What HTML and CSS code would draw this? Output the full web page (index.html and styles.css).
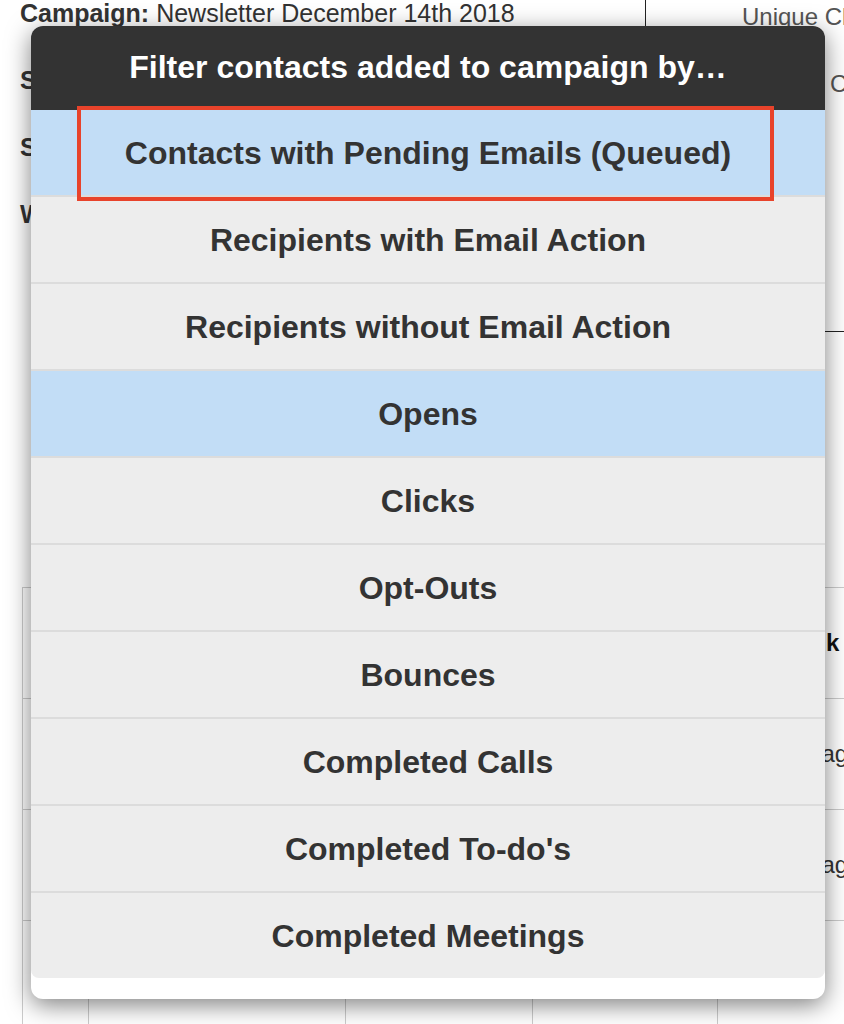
FILE: index.html
```html
<!DOCTYPE html>
<html lang="en">
<head>
  <meta charset="UTF-8">
  <meta name="viewport" content="width=device-width, initial-scale=1.0">
  <title>Campaign Report</title>
  <link rel="stylesheet" href="styles.css">
</head>
<body>

  <!-- campaign summary behind the dialog -->
  <div class="summary">
    <div class="summary-info">
      <p class="info-row"><b>Campaign:</b> Newsletter December 14th 2018</p>
      <p class="info-row"><b>Sent:</b> 12/14/2018 9:00 AM</p>
      <p class="info-row"><b>Subject:</b> Holiday hours and updates</p>
      <p class="info-row"><b>Workflow:</b> Monthly Newsletter</p>
    </div>
    <div class="summary-stats">
      <p class="stat-row">Unique Clicks</p>
      <p class="stat-row stat-row-far">Clicks</p>
    </div>
  </div>

  <table class="recipients">
    <colgroup>
      <col class="col-check">
      <col class="col-name">
      <col class="col-email">
      <col class="col-status">
      <col class="col-last">
    </colgroup>
    <tr class="recipients-head">
      <th></th>
      <th>Name</th>
      <th>Email</th>
      <th>Status</th>
      <th>Link</th>
    </tr>
    <tr>
      <td></td><td>Dana Whitfield</td><td>dana@example.com</td><td>Opened</td><td>2 days ago</td>
    </tr>
    <tr>
      <td></td><td>Marcus Lee</td><td>marcus@example.com</td><td>Clicked</td><td>3 days ago</td>
    </tr>
    <tr>
      <td></td><td>Priya Nair</td><td>priya@example.com</td><td>Queued</td><td></td>
    </tr>
  </table>

  <!-- filter dialog -->
  <div class="filter-modal">
    <h2 class="filter-title">Filter contacts added to campaign by…</h2>
    <ul class="filter-list">
      <li class="filter-item is-selected is-focused">Contacts with Pending Emails (Queued)</li>
      <li class="filter-item">Recipients with Email Action</li>
      <li class="filter-item">Recipients without Email Action</li>
      <li class="filter-item is-selected">Opens</li>
      <li class="filter-item">Clicks</li>
      <li class="filter-item">Opt-Outs</li>
      <li class="filter-item">Bounces</li>
      <li class="filter-item">Completed Calls</li>
      <li class="filter-item">Completed To-do's</li>
      <li class="filter-item">Completed Meetings</li>
    </ul>
  </div>

</body>
</html>
```

FILE: styles.css
```css
body {
    font-family: "Liberation Sans", Arial, sans-serif;
    background-color: #fff;
    color: #333;
    margin: 0;
    padding: 0;
    overflow: hidden;
}

/* summary block */
.summary {
    display: flex;
    margin-top: -20px;
}

.summary-info {
    flex-shrink: 0;
    width: 625px;
    height: 351px;
    padding-left: 20px;
    border-right: 1px solid #222;
}

.info-row {
    margin: 0;
    height: 67px;
    line-height: 67px;
    font-size: 25px;
    white-space: nowrap;
}

.summary-stats {
    flex: 1;
    min-width: 0;
    height: 351px;
    border-bottom: 1px solid #222;
    padding-left: 96px;
    overflow: hidden;
}

.stat-row {
    margin: 0;
    height: 67px;
    line-height: 74px;
    font-size: 24px;
    color: #555;
    white-space: nowrap;
}

.stat-row-far {
    padding-left: 88px;
}

/* recipients table */
.recipients {
    margin: 255px 0 0 22px;
    border-collapse: collapse;
    table-layout: fixed;
    width: 895px;
    font-size: 24px;
}

.col-check { width: 66px; }
.col-name { width: 257px; }
.col-email { width: 187px; }
.col-status { width: 185px; }
.col-last { width: 200px; }

.recipients th,
.recipients td {
    border: 1px solid #ccc;
    height: 110px;
    padding: 0 12px;
    text-align: left;
    white-space: nowrap;
    overflow: hidden;
}

.recipients th {
    color: #111;
}

.recipients-head th:last-child {
    padding-left: 72px;
}

.recipients td:last-child {
    padding-left: 26px;
}

/* filter dialog */
.filter-modal {
    position: absolute;
    top: 26px;
    left: 31px;
    width: 794px;
    padding-bottom: 21px;
    background-color: #fff;
    border-radius: 12px;
    overflow: hidden;
    box-shadow: 0 6px 24px rgba(0, 0, 0, 0.5);
}

.filter-title {
    margin: 0;
    height: 84px;
    line-height: 82px;
    background-color: #333;
    color: #fff;
    text-align: center;
    font-size: 32px;
    font-weight: bold;
}

.filter-list {
    list-style: none;
    margin: 0;
    padding: 0;
    background-color: #ededed;
    border-radius: 0 0 8px 8px;
}

.filter-item {
    position: relative;
    height: 85px;
    line-height: 86px;
    text-align: center;
    font-size: 32px;
    font-weight: bold;
    color: #333;
    border-bottom: 2px solid #dcdcdc;
}

.filter-item:last-child {
    border-bottom: none;
}

.filter-item.is-selected {
    background-color: #c2ddf6;
}

/* keyboard focus ring */
.filter-item.is-focused::after {
    content: "";
    position: absolute;
    top: -4px;
    left: 46px;
    right: 51px;
    bottom: -6px;
    border: 4px solid #e8432b;
}
```
